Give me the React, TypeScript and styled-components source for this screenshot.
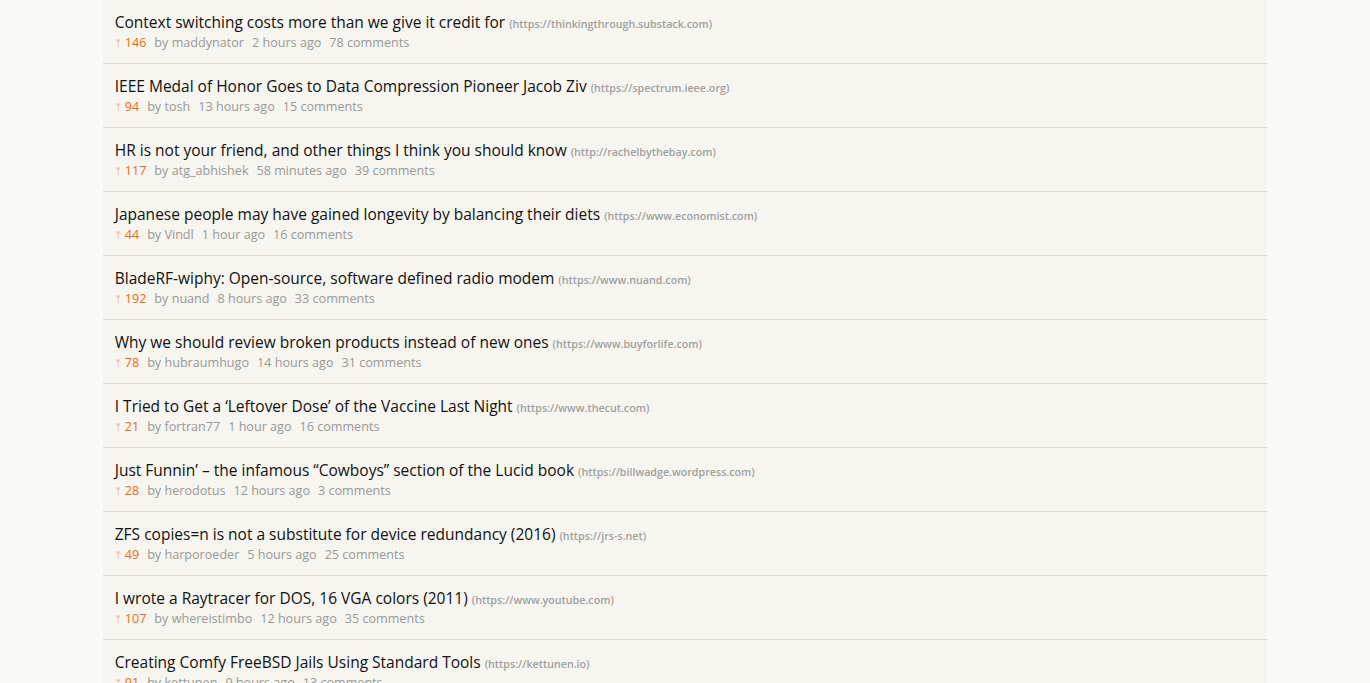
import React from "react";
import styled, { createGlobalStyle } from "styled-components";

const Global = createGlobalStyle`
  html, body { margin: 0; padding: 0; background: #f9f9f5; }
  body { font-family: "Open Sans", "Noto Sans", sans-serif; }
`;

const List = styled.ul`
  list-style: none;
  margin: 0 auto;
  padding: 0;
  width: 85%;
  background: #f6f5ef;
`;

const Item = styled.li`
  padding: 12px 12px 13px;
  border-bottom: 1px solid #dddbd6;
  height: 38px;
`;

const TitleLine = styled.div`
  display: flex;
  align-items: baseline;
  gap: 4px;
  line-height: 20px;
  white-space: nowrap;
`;

const Title = styled.a`
  font-size: 15.5px;
  color: #111;
  text-decoration: none;
`;

const Domain = styled.span`
  font-size: 10.7px;
  font-weight: 600;
  color: #a0a0a0;
`;

const Meta = styled.div`
  display: flex;
  gap: 8px;
  font-size: 12.6px;
  line-height: 18px;
  height: 18px;
  color: #999;
`;

const Score = styled.span`
  color: #f26b10;
`;

const Arrow = styled.span`
  color: #f5a08a;
  font-size: 14px;
  line-height: 1;
  margin-right: 3px;
`;

type Story = { t: string; d: string; s: number; u: string; a: string; c: number };

const stories: Story[] = [
  { t: "Context switching costs more than we give it credit for", d: "https://thinkingthrough.substack.com", s: 146, u: "maddynator", a: "2 hours ago", c: 78 },
  { t: "IEEE Medal of Honor Goes to Data Compression Pioneer Jacob Ziv", d: "https://spectrum.ieee.org", s: 94, u: "tosh", a: "13 hours ago", c: 15 },
  { t: "HR is not your friend, and other things I think you should know", d: "http://rachelbythebay.com", s: 117, u: "atg_abhishek", a: "58 minutes ago", c: 39 },
  { t: "Japanese people may have gained longevity by balancing their diets", d: "https://www.economist.com", s: 44, u: "Vindl", a: "1 hour ago", c: 16 },
  { t: "BladeRF-wiphy: Open-source, software defined radio modem", d: "https://www.nuand.com", s: 192, u: "nuand", a: "8 hours ago", c: 33 },
  { t: "Why we should review broken products instead of new ones", d: "https://www.buyforlife.com", s: 78, u: "hubraumhugo", a: "14 hours ago", c: 31 },
  { t: "I Tried to Get a \u2018Leftover Dose\u2019 of the Vaccine Last Night", d: "https://www.thecut.com", s: 21, u: "fortran77", a: "1 hour ago", c: 16 },
  { t: "Just Funnin\u2019 \u2013 the infamous \u201cCowboys\u201d section of the Lucid book", d: "https://billwadge.wordpress.com", s: 28, u: "herodotus", a: "12 hours ago", c: 3 },
  { t: "ZFS copies=n is not a substitute for device redundancy (2016)", d: "https://jrs-s.net", s: 49, u: "harporoeder", a: "5 hours ago", c: 25 },
  { t: "I wrote a Raytracer for DOS, 16 VGA colors (2011)", d: "https://www.youtube.com", s: 107, u: "whereistimbo", a: "12 hours ago", c: 35 },
  { t: "Creating Comfy FreeBSD Jails Using Standard Tools", d: "https://kettunen.io", s: 91, u: "kettunen", a: "9 hours ago", c: 13 },
];

export default function App() {
  return (
    <>
      <Global />
      <List>
        {stories.map((s) => (
          <Item key={s.t}>
            <TitleLine>
              <Title href="#">{s.t}</Title>
              <Domain>({s.d})</Domain>
            </TitleLine>
            <Meta>
              <Score>
                <Arrow>↑</Arrow>
                {s.s}
              </Score>
              <span>by {s.u}</span>
              <span>{s.a}</span>
              <span>{s.c} comments</span>
            </Meta>
          </Item>
        ))}
      </List>
    </>
  );
}
